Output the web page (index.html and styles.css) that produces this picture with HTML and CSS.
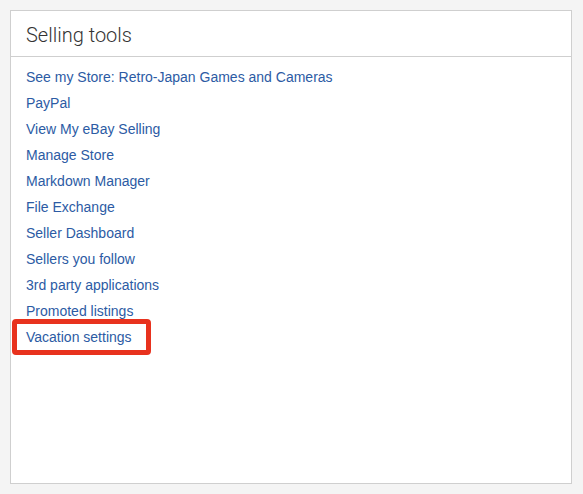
FILE: index.html
```html
<!DOCTYPE html>
<html>
<head>
<meta charset="utf-8">
<link rel="stylesheet" href="styles.css">
</head>
<body>
<section class="panel">
  <header class="panel-head"><h2 class="panel-title">Selling tools</h2></header>
  <ul class="tools">
    <li><a href="#">See my Store: Retro-Japan Games and Cameras</a></li>
    <li><a href="#">PayPal</a></li>
    <li><a href="#">View My eBay Selling</a></li>
    <li><a href="#">Manage Store</a></li>
    <li><a href="#">Markdown Manager</a></li>
    <li><a href="#">File Exchange</a></li>
    <li><a href="#">Seller Dashboard</a></li>
    <li><a href="#">Sellers you follow</a></li>
    <li><a href="#">3rd party applications</a></li>
    <li><a href="#">Promoted listings</a></li>
    <li class="marked"><a href="#">Vacation settings</a><span class="highlight"></span></li>
  </ul>
</section>
</body>
</html>
```

FILE: styles.css
```css
html, body {
  margin: 0;
  padding: 0;
  background: #f4f4f4;
}
body {
  padding: 10px 11px 10px 10px;
  font-family: "Liberation Sans", Arial, sans-serif;
}
.panel {
  box-sizing: border-box;
  width: 562px;
  height: 474px;
  background: #fff;
  border: 1px solid #cfcfcf;
}
.panel-head {
  height: 45px;
  border-bottom: 1px solid #cfcfcf;
  display: flex;
  align-items: center;
  padding-left: 15px;
}
.panel-title {
  margin: 0;
  font-family: Roboto, "Liberation Sans", sans-serif;
  font-weight: 300;
  font-size: 20px;
  color: #333;
  padding-top: 2px;
}
.tools {
  list-style: none;
  margin: 0;
  padding: 7px 0 0 15px;
}
.tools li {
  line-height: 26px;
  font-size: 14px;
}
.tools a {
  color: #2c5ba4;
  text-decoration: none;
}
.marked {
  position: relative;
}
.highlight {
  position: absolute;
  left: -14px;
  top: -5px;
  width: 139px;
  height: 36px;
  box-sizing: border-box;
  border: 5px solid #e8321e;
  border-radius: 4px;
}
```
